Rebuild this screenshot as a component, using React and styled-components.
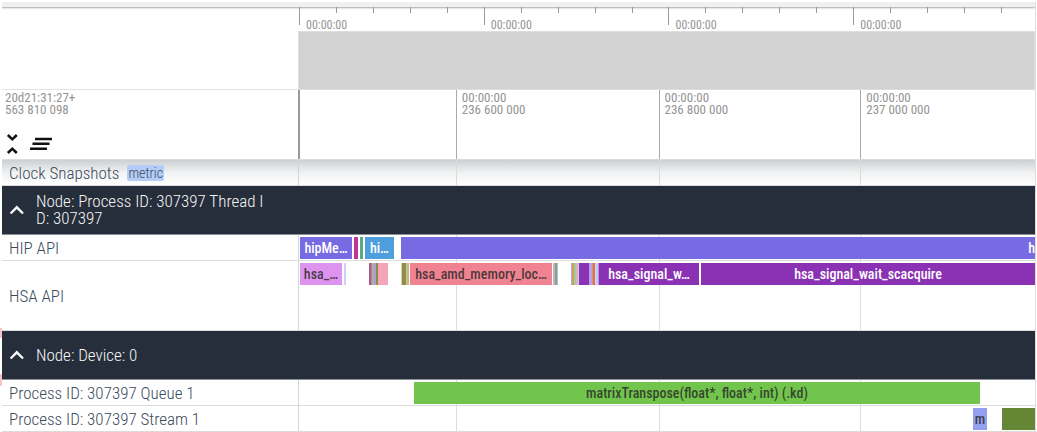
import React from "react";
import styled, { createGlobalStyle } from "styled-components";

const GlobalStyle = createGlobalStyle`
  *, *::before, *::after { box-sizing: border-box; }
  body { margin: 0; background: #fff; font-family: "Roboto Condensed", Roboto, sans-serif; }
`;

const Page = styled.main`
  padding: 2px 1px 0 2px;
  background: linear-gradient(#fbc4c4, #fbc4c4) 0 328px / 2px 10px no-repeat,
    linear-gradient(#fbc4c4, #fbc4c4) 0 374px / 2px 12px no-repeat;
`;

const Viewer = styled.div`
  border-right: 1px solid #dedede;
  background: #fff;
  overflow: hidden;
`;

const TopBar = styled.div`
  position: relative;
  height: 5px;
  background: #f0f0f0;
  box-shadow: 0 1px 2px rgba(0, 0, 0, 0.35);
`;

const Split = styled.div`
  display: grid;
  grid-template-columns: 296px minmax(0, 1fr);
  height: ${(p) => p.$height}px;
`;

const OverviewSide = styled.div`
  border-bottom: 1px solid #e2e2e2;
`;

const Overview = styled.div`
  display: flex;
  flex-direction: column;
  min-width: 0;
`;

const Ruler = styled.div`
  display: flex;
  height: 24px;
  padding-left: 1px;
  overflow: hidden;
`;

const RulerCell = styled.div`
  flex: 0 0 25.1%;
  position: relative;
`;

const MinorTicks = styled.div`
  display: flex;
  height: 18px;
`;

const Tick = styled.span`
  flex: 1;
  height: ${(p) => (p.$major ? 18 : 6)}px;
  border-left: 1px solid #999;
`;

const RulerLabel = styled.span`
  position: absolute;
  left: 7px;
  top: 11px;
  font-size: 12px;
  line-height: 14px;
  color: #949494;
`;

const OverviewArea = styled.div`
  flex: 1;
  background: #d2d2d2;
  border: 1px solid #dedede;
`;

const AxisSide = styled.div`
  display: flex;
  flex-direction: column;
  justify-content: space-between;
  padding: 2px 3px 5px;
`;

const AxisText = styled.div`
  font-size: 13px;
  line-height: 12px;
  color: #949494;
  white-space: nowrap;
`;

const Tools = styled.div`
  display: flex;
  gap: 8px;
`;

const IconButton = styled.button`
  display: flex;
  padding: 0;
  border: 0;
  background: none;
  color: inherit;
`;

const Axis = styled.div`
  display: flex;
  min-width: 0;
  border-left: 2px solid #999;
`;

const AxisCell = styled.div`
  flex: ${(p) => p.$span} 0 0;
  min-width: 0;
  box-shadow: ${(p) => (p.$line ? "inset 1px 0 #aaa" : "none")};

  > * { margin: 2px 0 0 6px; }
`;

const Row = styled(Split)`
  border-bottom: 1px solid #dcdcdc;
  background: ${(p) =>
    p.$shaded ? "linear-gradient(#cdd0d3, #f0f1f2 50%, #fff)" : "#fff"};
`;

const RowLabel = styled.div`
  display: flex;
  align-items: center;
  gap: 8px;
  padding-left: 7px;
  font-size: 17px;
  font-weight: 300;
  line-height: 20px;
  color: #3c4b5d;
  white-space: nowrap;
`;

const Badge = styled.span`
  padding: 0 1px;
  border-radius: 2px;
  background: #b4cdf8;
  font-size: 14px;
  line-height: 16px;
`;

const Track = styled.div`
  display: grid;
  min-width: 0;
  border-left: 1px solid #cfd5e0;
  > * { grid-area: 1 / 1; }
`;

const Grid = styled.div`
  display: flex;
  padding-left: 1px;
`;

const GridCell = styled.span`
  flex: ${(p) => p.$span} 0 0;
  box-shadow: ${(p) => (p.$line ? "inset 1px 0 #dcdcdc" : "none")};
`;

const Slices = styled.div`
  display: flex;
  min-width: 0;
  height: 24px;
  padding: 2px 0 0 1px;
`;

const Slice = styled.div`
  flex: ${(p) => p.$span} 0 0;
  min-width: 0;
  height: 22px;
  overflow: hidden;
  text-align: ${(p) => (p.$edge ? "right" : "center")};
  background: ${(p) => p.$color || "transparent"};
  color: ${(p) => (p.$dark ? "rgba(40, 40, 40, 0.82)" : "#fff")};
`;

const SliceLabel = styled.span`
  display: block;
  margin: 0 ${(p) => (p.$edge ? 0 : 1)}px;
  overflow: hidden;
  white-space: nowrap;
  font-size: 14px;
  font-weight: 500;
  line-height: 22px;
`;

const GroupHeader = styled.div`
  display: flex;
  align-items: center;
  gap: 12px;
  height: 49px;
  padding-left: 7px;
  border-bottom: 1px solid #8a9097;
  background: #272e3b;
  color: #f5f6f7;
  font-size: 17px;
  font-weight: 300;
  line-height: 17px;
`;

const gridSpans = [156, 203, 202, 175];

const axisLabels = [
  null,
  ["00:00:00", "236 600 000"],
  ["00:00:00", "236 800 000"],
  ["00:00:00", "237 000 000"],
];

// Each slice is [duration, colour, label, dark text, label at edge]; a missing colour is idle time.
const hip = [
  [52, "#776be3", "hipMe…"], [2], [4, "#c2349b"], [2], [3, "#5ba88a"], [2],
  [29, "#4d9edb", "hi…"], [7], [635, "#776be3", "h", false, true],
];

const hsa = [
  [42, "#de94ee", "hsa_…", true], [2], [2, "#d5ccf5"], [23],
  [2, "#a55b91"], [1, "#d17f8b"], [2, "#a3b5a0"], [2, "#b19bd5"], [2, "#8f8a4b"],
  [10, "#f4a5b8"], [13], [1, "#d9cda8"], [4, "#8d8e48"], [1, "#c6c79a"], [2, "#cdb37c"], [1],
  [142, "#f08391", "hsa_amd_memory_loc…", true], [1], [2, "#d9a8bd"], [2, "#70ad78"], [1, "#c3b4e8"], [13],
  [1, "#b9a6dc"], [2, "#c9a35c"], [2, "#a9c79c"], [2, "#dcb0b8"], [1, "#bed1f2"],
  [10, "#8a32b3"], [3, "#b9a0e8"], [1, "#c99b73"], [2, "#e0705c"], [1, "#e3c8e8"], [2, "#bcd0f6"], [1, "#b191dc"],
  [100, "#8a32b3", "hsa_signal_w…"], [2],
  [334, "#8a32b3", "hsa_signal_wait_scacquire"],
];

const queue = [[114], [567, "#71c44c", "matrixTranspose(float*, float*, int) (.kd)", true], [55]];
const stream = [[674], [14, "#949ff0", "m", true], [15], [33, "#658735"]];

function TrackRow({ name, badge, height, slices = [], shaded }) {
  return (
    <Row $height={height} $shaded={shaded}>
      <RowLabel>
        {name}
        {badge && <Badge>{badge}</Badge>}
      </RowLabel>
      <Track>
        <Grid>
          {gridSpans.map((span, i) => <GridCell key={i} $span={span} $line={i > 0} />)}
        </Grid>
        <Slices>
          {slices.map(([span, color, label, dark, edge], i) => (
            <Slice key={i} $span={span} $color={color} $dark={dark} $edge={edge}>
              {label && <SliceLabel $edge={edge}>{label}</SliceLabel>}
            </Slice>
          ))}
        </Slices>
      </Track>
    </Row>
  );
}

function Group({ children }) {
  return (
    <GroupHeader>
      <IconButton aria-label="Collapse group">
        <svg width="15" height="18" viewBox="0 0 15 18" fill="none" stroke="currentColor" strokeWidth="2.4">
          <path d="M1.6 12.5 7.8 6.3l6.2 6.2" />
        </svg>
      </IconButton>
      <span>{children}</span>
    </GroupHeader>
  );
}

export default function App() {
  return (
    <>
      <GlobalStyle />
      <Page>
        <Viewer>
          <TopBar />
          <Split $height={83}>
            <OverviewSide />
            <Overview>
              <Ruler>
                {[0, 1, 2, 3].map((n) => (
                  <RulerCell key={n}>
                    <MinorTicks>
                      {[0, 1, 2, 3, 4].map((t) => <Tick key={t} $major={t === 0} />)}
                    </MinorTicks>
                    <RulerLabel>00:00:00</RulerLabel>
                  </RulerCell>
                ))}
              </Ruler>
              <OverviewArea />
            </Overview>
          </Split>
          <Row $height={70}>
            <AxisSide>
              <AxisText>20d21:31:27+<br />563 810 098</AxisText>
              <Tools>
                <IconButton aria-label="Collapse all">
                  <svg width="16" height="20" viewBox="0 0 16 20" fill="none" stroke="#111" strokeWidth="2.5">
                    <path d="m2.8 1 4.5 4.3L11.8 1M2.8 19l4.5-4.3 4.5 4.3" />
                  </svg>
                </IconButton>
                <IconButton aria-label="Clear all">
                  <svg width="24" height="20" viewBox="0 0 24 20" fill="#111">
                    <path d="M6 3.8h17v2.5H6zM3.5 8.6h17v2.5h-17zM1 13.4h17v2.5H1z" />
                  </svg>
                </IconButton>
              </Tools>
            </AxisSide>
            <Axis>
              {axisLabels.map((label, i) => (
                <AxisCell key={i} $span={gridSpans[i]} $line={i > 0}>
                  {label && <AxisText>{label[0]}<br />{label[1]}</AxisText>}
                </AxisCell>
              ))}
            </Axis>
          </Row>
          <TrackRow name="Clock Snapshots" badge="metric" height={26} shaded />
          <Group>Node: Process ID: 307397 Thread I<br />D: 307397</Group>
          <TrackRow name="HIP API" height={26} slices={hip} />
          <TrackRow name="HSA API" height={70} slices={hsa} />
          <Group>Node: Device: 0</Group>
          <TrackRow name="Process ID: 307397 Queue 1" height={26} slices={queue} />
          <TrackRow name="Process ID: 307397 Stream 1" height={26} slices={stream} />
        </Viewer>
      </Page>
    </>
  );
}
